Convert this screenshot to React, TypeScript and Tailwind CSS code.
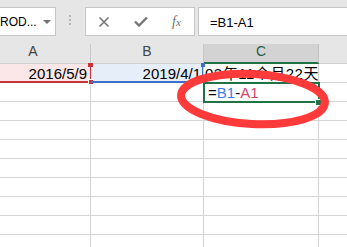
import React from "react";

const rows = Array.from({ length: 8 });

export default function App() {
  return (
    <div className="relative w-[347px] h-[247px] overflow-hidden bg-white font-['Liberation_Sans',Arial,sans-serif]">
      {/* formula bar */}
      <div className="h-[44px] bg-[#e6e6e6] flex items-start pt-[7px]">
        <div className="-ml-px w-[57px] h-[29px] bg-white border border-[#c6c6c6] flex items-center">
          <span className="text-[12px] text-black leading-none pt-[1px]">ROD...</span>
          <span className="ml-[6px] w-0 h-0 border-l-[4px] border-r-[4px] border-t-[4px] border-l-transparent border-r-transparent border-t-[#707070]" />
        </div>
        <div className="ml-[13px] mt-[8px] flex flex-col gap-[2px]">
          <span className="w-[2px] h-[2px] bg-[#b4b4b4]" />
          <span className="w-[2px] h-[2px] bg-[#b4b4b4]" />
          <span className="w-[2px] h-[2px] bg-[#b4b4b4]" />
        </div>
        <div className="ml-[14px] w-[110px] h-[29px] bg-white border border-[#c6c6c6] flex items-center">
          <svg width="12" height="12" viewBox="0 0 12 12" className="ml-[12px]">
            <path d="M1.5 1.5 L10.5 10.5 M10.5 1.5 L1.5 10.5" stroke="#767676" strokeWidth="1.6" fill="none" />
          </svg>
          <svg width="14" height="11" viewBox="0 0 14 11" className="ml-[24px]">
            <path d="M1 5.5 L5 9.5 L13 1.5" stroke="#767676" strokeWidth="2.4" fill="none" />
          </svg>
          <span className="ml-[24px] font-['Liberation_Serif',serif] italic text-[#707070] text-[14px] leading-none">
            f<span className="text-[11px]">x</span>
          </span>
        </div>
        <div className="ml-[3px] flex-1 h-[29px] bg-white border border-r-0 border-[#c6c6c6] flex items-center pl-[11px]">
          <span className="text-[13px] text-black leading-none pt-[1px]">=B1-A1</span>
        </div>
      </div>

      {/* column headers */}
      <div className="flex h-[20px] bg-[#e6e6e6] border-b border-[#d0d0d0] text-[14px] text-[#444]">
        <div className="-ml-[24px] w-[115px] border-r border-[#c8c8c8] flex items-end justify-center pb-[1px]">A</div>
        <div className="w-[113px] border-r border-[#c8c8c8] flex items-end justify-center pb-[1px]">B</div>
        <div className="w-[115px] bg-[#d3d3d3] border-r border-[#c0c0c0] border-b-2 border-b-[#217346] -mb-px flex items-end justify-center text-[#2b5e45]">C</div>
        <div className="flex-1" />
      </div>

      {/* row 1 */}
      <div className="flex h-[19px] border-b border-[#d4d4d4] text-[15px] text-black">
        <div className="-ml-[24px] w-[115px] bg-[#fbe7e7] border-r border-[#d4d4d4] flex items-center justify-end pr-[3px] leading-none">2016/5/9</div>
        <div className="w-[113px] bg-[#e6eef9] border-r border-[#d4d4d4] flex items-center justify-end pr-[2px] leading-none">2019/4/1</div>
        <div className="w-[115px] border-r border-[#d4d4d4] flex items-center pl-[1px] leading-none overflow-hidden whitespace-nowrap tracking-[0.5px] font-['Liberation_Sans','Noto_Sans_CJK_SC',sans-serif]">02年11个月22天</div>
        <div className="flex-1" />
      </div>

      {/* row 2 */}
      <div className="flex h-[19px] border-b border-[#d4d4d4] text-[15px]">
        <div className="-ml-[24px] w-[115px] border-r border-[#d4d4d4]" />
        <div className="w-[113px] border-r border-[#d4d4d4]" />
        <div className="w-[115px] border-r border-[#d4d4d4] flex items-center pl-[4px] leading-none">
          <span className="text-black">=</span>
          <span className="text-[#3c7fe6]">B1</span>
          <span className="text-black">-</span>
          <span className="text-[#d2466a]">A1</span>
        </div>
        <div className="flex-1" />
      </div>

      {rows.map((_, i) => (
        <div key={i} className="flex h-[19px] border-b border-[#d4d4d4]">
          <div className="-ml-[24px] w-[115px] border-r border-[#d4d4d4]" />
          <div className="w-[113px] border-r border-[#d4d4d4]" />
          <div className="w-[115px] border-r border-[#d4d4d4]" />
          <div className="flex-1" />
        </div>
      ))}

      {/* reference highlight A1 */}
      <div className="absolute left-0 top-[81px] w-[90px] h-[2px] bg-[#c8323b]" />
      <div className="absolute left-[90px] top-[64px] w-[1px] h-[19px] bg-[#c8323b]" />
      <div className="absolute left-[88px] top-[63px] w-[5px] h-[4px] bg-[#c8323b]" />
      <div className="absolute left-[88px] top-[79px] w-[6px] h-[6px] bg-[#c8323b] border border-white" />
      {/* reference highlight B1 */}
      <div className="absolute left-[91px] top-[81px] w-[112px] h-[2px] bg-[#3a70c8]" />
      <div className="absolute left-[202px] top-[64px] w-[1px] h-[18px] bg-[#3a70c8]" />
      <div className="absolute left-[201px] top-[63px] w-[4px] h-[4px] bg-[#3a70c8]" />
      {/* active cell C2 */}
      <div className="absolute left-[203px] top-[82px] w-[117px] h-[21px] border-2 border-[#217346]" />
      <div className="absolute left-[315px] top-[99px] w-[7px] h-[7px] bg-[#217346] border border-white" />

      {/* red annotation */}
      <svg className="absolute left-0 top-0" width="347" height="247" viewBox="0 0 347 247">
        <ellipse cx="253" cy="99" rx="72" ry="25" fill="none" stroke="#fe3a3a" strokeWidth="8" transform="rotate(3 253 99)" />
      </svg>
    </div>
  );
}
